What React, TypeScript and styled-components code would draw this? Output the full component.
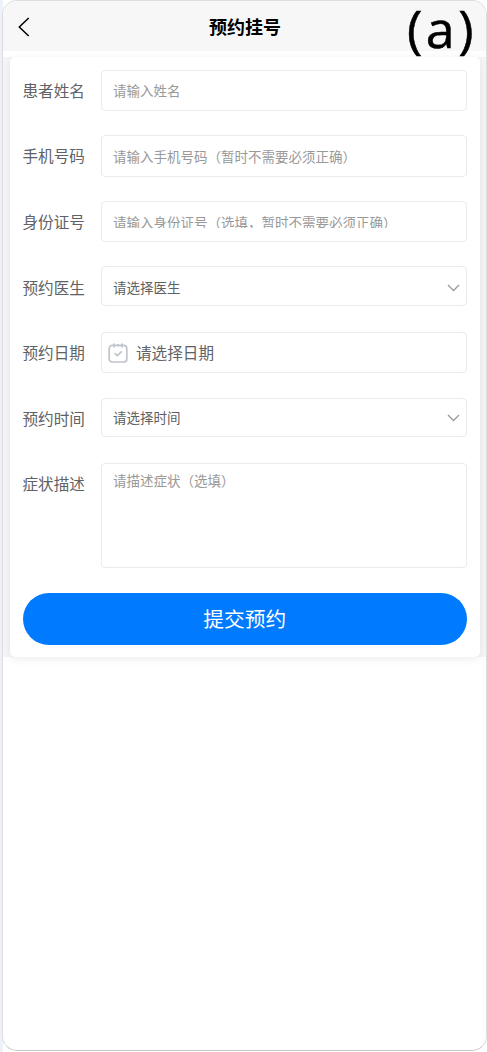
import React from 'react';
import styled, { createGlobalStyle } from 'styled-components';

const GlobalStyle = createGlobalStyle`
  *, *::before, *::after { box-sizing: border-box; }
  body {
    margin: 0;
    background: linear-gradient(90deg, #eef1f8 0, #eef1f8 3px, #fff 3px);
    font-family: "Noto Sans CJK SC", sans-serif;
  }
`;

const Phone = styled.main`
  position: relative;
  display: flex;
  flex-direction: column;
  width: 485px;
  height: 1051px;
  margin-left: 2px;
  overflow: hidden;
  background: #fff;
  border: 1px solid #dcdddf;
  border-bottom-color: #c8c8c8;
  border-radius: 15px;
`;

const Header = styled.header`
  display: grid;
  grid-template-columns: 45px 1fr 44px;
  align-items: center;
  flex: none;
  height: 50px;
  margin-bottom: 6px;
  background: #f7f7f7;
`;

const Back = styled.button`
  display: flex;
  padding: 1px 0 0 15px;
  border: 0;
  background: none;
`;

const Title = styled.h1`
  margin: 0;
  color: #000;
  font-size: 18px;
  line-height: 26px;
  font-weight: 700;
  text-align: center;
`;

const FigureTag = styled.span`
  position: absolute;
  top: -5px;
  left: 404px;
  height: 61px;
  overflow: hidden;
  color: #000;
  font: 52px/64px "Open Sans", sans-serif;
  letter-spacing: 3.5px;
  -webkit-text-stroke: 0.5px #000;
`;

const Content = styled.section`
  flex: none;
  height: 600px;
  padding: 0 6px 0 7px;
  background: #f5f5f5;
`;

const Card = styled.form`
  height: 600px;
  padding: 13px 13px 12px 12.5px;
  background: #fff;
  border-radius: 5px;
  box-shadow: 0 2px 8px rgba(0, 0, 0, 0.08);
`;

const Row = styled.div<{ $height?: number }>`
  display: flex;
  align-items: flex-start;
  height: ${p => p.$height ?? 66}px;
`;

const Label = styled.label<{ $line?: number }>`
  flex: none;
  width: 78.5px;
  color: #606266;
  font-size: 15.6px;
  line-height: ${p => p.$line ?? 41}px;
`;

const Field = styled.div<{ $height?: number; $tone?: string; $size?: number }>`
  display: flex;
  flex: 1;
  align-items: center;
  height: ${p => p.$height ?? 41}px;
  padding: 0 7px 1px 11px;
  border: 1px solid #ebebeb;
  border-radius: 4px;
  color: ${p => p.$tone ?? '#999'};
  font-size: ${p => p.$size ?? 13.5}px;
  line-height: 20px;
  white-space: nowrap;
`;

const SelectField = styled(Field)<{ $top?: number; $bottom?: number }>`
  padding: ${p => p.$top ?? 0}px 6px ${p => p.$bottom ?? 0}px 11px;

  svg { margin-top: 2px; }
`;

const DateField = styled(Field)`
  gap: 8px;
  padding: 0 7px 2px 6px;

  svg { margin-top: 2px; }
`;

const TextArea = styled(Field)`
  align-items: flex-start;
  padding-top: 6px;
`;

const Clipped = styled.span`
  height: 16px;
  margin-top: -2px;
  overflow: hidden;
  line-height: 20px;
`;

const Value = styled.span`
  flex: 1;
`;

const Submit = styled.button`
  display: block;
  width: 100%;
  height: 52px;
  padding: 0 0 2px;
  border: 0;
  border-radius: 26px;
  background: #007aff;
  color: #fff;
  font: 20.7px/50px "Noto Sans CJK SC", sans-serif;
`;

const Chevron = () => (
  <svg width="13" height="8" viewBox="0 0 13 8" fill="none" stroke="#999" strokeWidth="1.3">
    <path d="M1 1 L6.5 6.5 L12 1" />
  </svg>
);

const Calendar = () => (
  <svg width="20" height="20" viewBox="0 0 20 20" fill="none" stroke="#c0c4cc" strokeWidth="1.7" strokeLinecap="round" strokeLinejoin="round">
    <rect x="1.2" y="2.4" width="17.6" height="16.6" rx="3" />
    <path d="M6 1v3M10 1.7v1M14 1v3" />
    <path d="M7 10.5l2.3 2.2 4-3.8" />
  </svg>
);

export default function App() {
  return (
    <>
      <GlobalStyle />
      <Phone>
        <Header>
          <Back type="button" aria-label="返回">
            <svg width="12" height="20" viewBox="0 0 12 20" fill="none" stroke="#000" strokeWidth="1.5">
              <path d="M10.7 1 L1.3 10 L10.7 19" />
            </svg>
          </Back>
          <Title>预约挂号</Title>
        </Header>
        <FigureTag>(a)</FigureTag>
        <Content>
          <Card>
            <Row $height={65}>
              <Label>患者姓名</Label>
              <Field>请输入姓名</Field>
            </Row>
            <Row>
              <Label>手机号码</Label>
              <Field $height={42}>请输入手机号码（暂时不需要必须正确）</Field>
            </Row>
            <Row $height={65}>
              <Label>身份证号</Label>
              <Field><Clipped>请输入身份证号（选填，暂时不需要必须正确）</Clipped></Field>
            </Row>
            <Row>
              <Label $line={43}>预约医生</Label>
              <SelectField $height={40} $top={2} $tone="#606060"><Value>请选择医生</Value><Chevron /></SelectField>
            </Row>
            <Row>
              <Label>预约日期</Label>
              <DateField $tone="#606266" $size={15.6}><Calendar />请选择日期</DateField>
            </Row>
            <Row $height={65}>
              <Label>预约时间</Label>
              <SelectField $height={39} $bottom={1} $tone="#606060"><Value>请选择时间</Value><Chevron /></SelectField>
            </Row>
            <Row $height={129.5}>
              <Label>症状描述</Label>
              <TextArea $height={105}>请描述症状（选填）</TextArea>
            </Row>
            <Submit type="button">提交预约</Submit>
          </Card>
        </Content>
      </Phone>
    </>
  );
}
